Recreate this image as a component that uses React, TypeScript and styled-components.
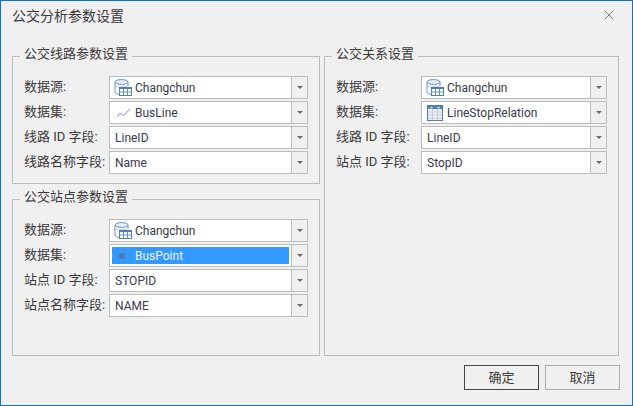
import React from "react";
import styled, { createGlobalStyle } from "styled-components";
import { X } from "lucide-react";

const GlobalStyle = createGlobalStyle`
    html, body {
        margin: 0;
        padding: 0;
        background: #f0f0f0;
    }
    * {
        box-sizing: border-box;
    }
`;

const FONT = `Roboto, "Noto Sans CJK SC", sans-serif`;

const Window = styled.div`
    width: 633px;
    height: 406px;
    display: flex;
    flex-direction: column;
    border: 1px solid #0a74c8;
    background: #f0f0f0;
    color: #3a3a3a;
    font-family: ${FONT};
    font-size: 13px;
    overflow: hidden;
`;

const TitleBar = styled.div`
    height: 45px;
    flex: none;
    display: flex;
    justify-content: space-between;
    padding: 6px 15px 0 11px;
`;

const Title = styled.div`
    font-size: 14px;
    line-height: 18px;
`;

const CloseButton = styled.button`
    width: 16px;
    height: 16px;
    padding: 0;
    border: 0;
    background: none;
    color: #4a4a4a;
    display: flex;
    align-items: center;
    justify-content: center;
`;

const Columns = styled.div`
    flex: none;
    height: 310px;
    margin: 0 13px 0 11px;
    display: grid;
    grid-template-columns: 308px 295px;
    column-gap: 4px;
`;

const Column = styled.div`
    display: flex;
    flex-direction: column;
    gap: 5px;
    min-height: 0;
`;

const Group = styled.fieldset<{ $grow?: boolean }>`
    margin: 0;
    min-width: 0;
    border: 1px solid #bcbcbc;
    padding: 10px 11px 9px;
    flex: ${(p) => (p.$grow ? "1" : "none")};
`;

const GroupTitle = styled.legend`
    margin-left: -4px;
    padding: 0 4px 4px;
    font-size: 13px;
    line-height: 16px;
`;

const Rows = styled.div`
    display: flex;
    flex-direction: column;
    gap: 2px;
`;

const Row = styled.div`
    display: grid;
    grid-template-columns: 85px 1fr;
    height: 23px;
    align-items: center;
`;

const Label = styled.label`
    white-space: nowrap;
    font-size: 13px;
    line-height: 20px;
    margin-top: -2px;
`;

const Combo = styled.div`
    height: 23px;
    display: flex;
    border: 1px solid #bcbcbc;
    background: #fff;
`;

const ComboValue = styled.div<{ $selected?: boolean }>`
    flex: 1;
    min-width: 0;
    margin: 2px;
    padding-left: 3px;
    display: flex;
    align-items: center;
    font-size: 12px;
    color: ${(p) => (p.$selected ? "#eaf3ff" : "#3a3a4a")};
    background: ${(p) => (p.$selected ? "#3399ff" : "transparent")};
`;

const IconSlot = styled.span`
    width: 20px;
    margin-left: -1px;
    margin-right: 1px;
    flex: none;
    display: flex;
    align-items: center;
`;

const ComboArrow = styled.div`
    width: 16px;
    flex: none;
    border-left: 1px solid #bcbcbc;
    background: #f0f0f0;
    display: flex;
    align-items: center;
    justify-content: center;

    &::after {
        content: "";
        border-style: solid;
        border-width: 3px 3.5px 0;
        border-color: #6a6a6a transparent transparent;
    }
`;

const Footer = styled.div`
    flex: 1;
    display: flex;
    justify-content: flex-end;
    gap: 6px;
    padding: 9px 12px 0 0;
`;

const DialogButton = styled.button<{ $primary?: boolean }>`
    width: 75px;
    height: 25px;
    padding: 0;
    background: #f0f0f0;
    border: 1px solid ${(p) => (p.$primary ? "#454545" : "#adadad")};
    color: #3a3a3a;
    font-family: ${FONT};
    font-size: 13px;
    line-height: 18px;
`;

const DatasourceIcon = () => (
    <svg width="18" height="17" viewBox="0 0 18 17">
        <ellipse cx="7.500" cy="3" rx="6.500" ry="2.400" fill="#e8eff7" stroke="#6f93bc" />
        <path d="M1 3v10c0 1.400 2.600 2.400 5 2.500M14 3v4" fill="none" stroke="#6f93bc" />
        <path d="M1 6c1 1.400 3 2 6.500 2S13 7.400 14 6" fill="none" stroke="#a9c0da" />
        <rect x="5.500" y="8.500" width="12" height="8" fill="#fff" stroke="#4f7fb5" />
        <path d="M5.500 9h12" stroke="#4f7fb5" strokeWidth="2" />
        <path d="M9.500 10v6M13.500 10v6M6 13h11" stroke="#6f93bc" />
    </svg>
);

const LineIcon = () => (
    <svg width="18" height="11" viewBox="-2 0 18 11">
        <path d="M1 9.500l3.500-3 3 2L14 2" fill="none" stroke="#a8bcd6" strokeWidth="1.300" />
        <path d="M1 7.500l3-2" fill="none" stroke="#d0dae8" />
    </svg>
);

const PointIcon = () => (
    <svg width="18" height="8" viewBox="-4 0 18 8">
        <circle cx="4" cy="4" r="3.200" fill="#4a78b4" />
    </svg>
);

const TableIcon = () => (
    <svg width="18" height="16" viewBox="-1 0 18 16">
        <rect x="0.500" y="0.500" width="15" height="15" fill="#eef1f6" stroke="#5a7a9e" />
        <rect x="1" y="1" width="14" height="3" fill="#4f80b8" />
        <path d="M3 2l1.500 1.500L6 2M10 2l1.500 1.500L13 2" fill="#fff" />
        <path d="M1 7h14M1 10h14M1 13h14M5.500 4v11M10.500 4v11" stroke="#c3cbd8" />
    </svg>
);

interface IField {
    label: string;
    value: string;
    icon?: React.ReactNode;
    selected?: boolean;
}

const Field: React.FC<IField> = ({ label, value, icon, selected }) => (
    <Row>
        <Label>{label}</Label>
        <Combo>
            <ComboValue $selected={selected}>
                {icon && <IconSlot>{icon}</IconSlot>}
                {value}
            </ComboValue>
            <ComboArrow />
        </Combo>
    </Row>
);

const lineFields: IField[] = [
    { label: "数据源:", value: "Changchun", icon: <DatasourceIcon /> },
    { label: "数据集:", value: "BusLine", icon: <LineIcon /> },
    { label: "线路 ID 字段:", value: "LineID" },
    { label: "线路名称字段:", value: "Name" },
];

const stopFields: IField[] = [
    { label: "数据源:", value: "Changchun", icon: <DatasourceIcon /> },
    { label: "数据集:", value: "BusPoint", icon: <PointIcon />, selected: true },
    { label: "站点 ID 字段:", value: "STOPID" },
    { label: "站点名称字段:", value: "NAME" },
];

const relationFields: IField[] = [
    { label: "数据源:", value: "Changchun", icon: <DatasourceIcon /> },
    { label: "数据集:", value: "LineStopRelation", icon: <TableIcon /> },
    { label: "线路 ID 字段:", value: "LineID" },
    { label: "站点 ID 字段:", value: "StopID" },
];

const FieldGroup: React.FC<{ title: string; fields: IField[]; grow?: boolean }> = ({ title, fields, grow }) => (
    <Group $grow={grow}>
        <GroupTitle>{title}</GroupTitle>
        <Rows>
            {fields.map((f) => (
                <Field key={f.label} {...f} />
            ))}
        </Rows>
    </Group>
);

const App: React.FC = () => (
    <>
        <GlobalStyle />
        <Window>
            <TitleBar>
                <Title>公交分析参数设置</Title>
                <CloseButton aria-label="关闭">
                    <X size={20} strokeWidth={1} />
                </CloseButton>
            </TitleBar>
            <Columns>
                <Column>
                    <FieldGroup title="公交线路参数设置" fields={lineFields} />
                    <FieldGroup title="公交站点参数设置" fields={stopFields} grow />
                </Column>
                <Column>
                    <FieldGroup title="公交关系设置" fields={relationFields} grow />
                </Column>
            </Columns>
            <Footer>
                <DialogButton $primary>确定</DialogButton>
                <DialogButton>取消</DialogButton>
            </Footer>
        </Window>
    </>
);

export default App;
